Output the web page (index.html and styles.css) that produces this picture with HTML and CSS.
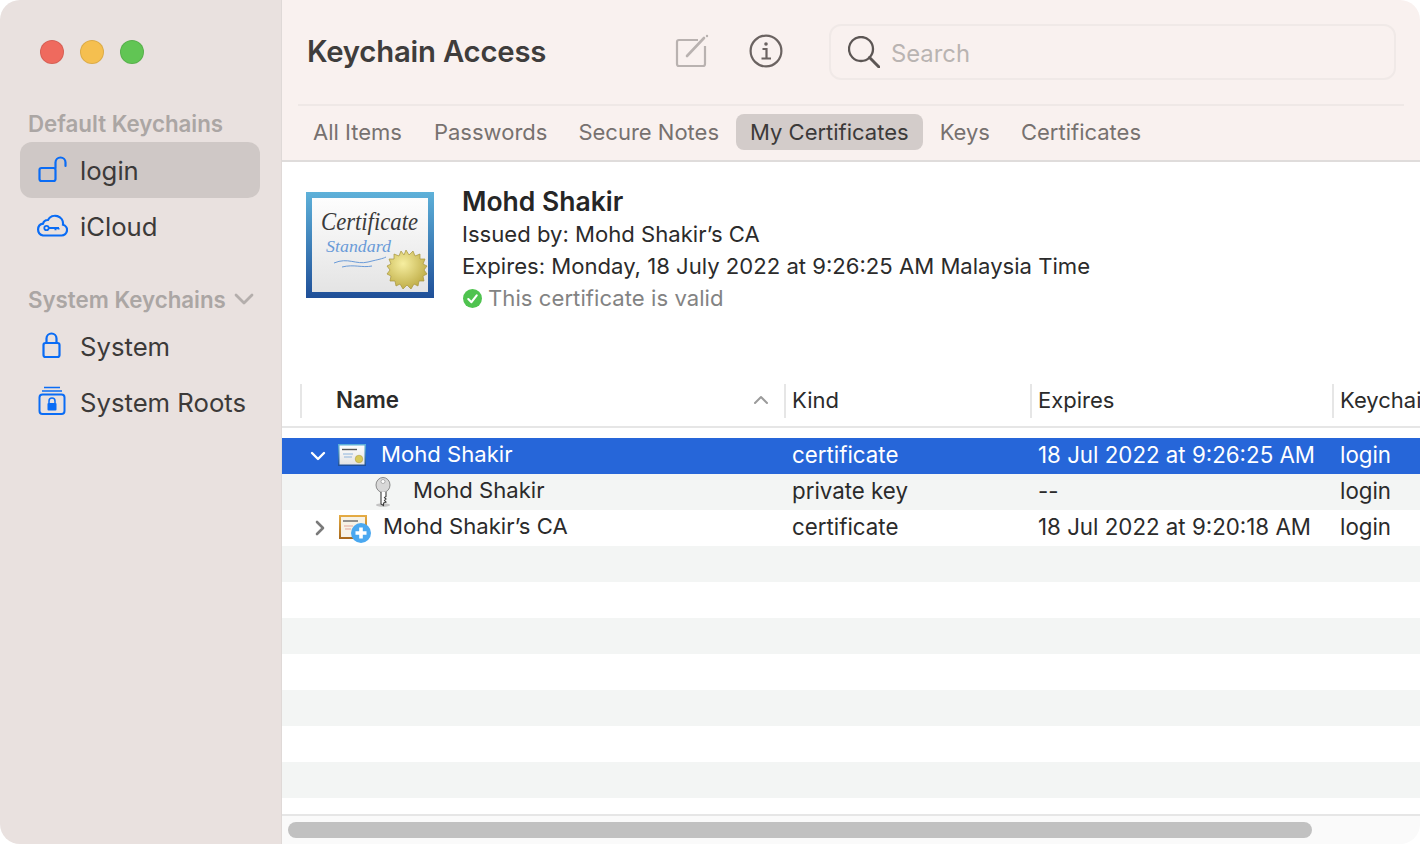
FILE: index.html
```html
<!DOCTYPE html>
<html lang="en">
<head>
<meta charset="utf-8">
<title>Keychain Access</title>
<link rel="stylesheet" href="styles.css">
</head>
<body>
<div class="window">
  <aside class="sidebar">
    <div class="lights"><span class="light red"></span><span class="light yellow"></span><span class="light green"></span></div>
    <div class="side-head">Default Keychains</div>
    <div class="side-row active">
      <svg class="side-icon" viewBox="0 0 32 32" fill="none" stroke="#0a6cf5" stroke-width="2.200"><rect x="3.500" y="15" width="16" height="13" rx="2"/><path d="M19.500 15V9.500a5 5 0 0 1 10 0V13" stroke-linecap="round"/></svg>
      <span>login</span>
    </div>
    <div class="side-row">
      <svg class="side-icon" viewBox="0 0 32 32" fill="none" stroke="#0a6cf5" stroke-width="2.200"><path d="M7 26.500h18.500a5.500 5.500 0 0 0 1.500-10.800 8 8 0 0 0-15-4.700 5 5 0 0 0-5 3.700A6 6 0 0 0 7 26.500z"/><circle cx="10.500" cy="19" r="2.200" stroke-width="1.800"/><path d="M13 19h10M19.500 19v2.200M22.500 19v1.600" stroke-width="2"/></svg>
      <span>iCloud</span>
    </div>
    <div class="side-head second">System Keychains
      <svg class="head-chev" viewBox="0 0 20 12" fill="none" stroke="#b4aeac" stroke-width="2.800" stroke-linecap="round" stroke-linejoin="round"><path d="M2 2l8 8 8-8"/></svg>
    </div>
    <div class="side-row">
      <svg class="side-icon" viewBox="0 0 32 32" fill="none" stroke="#0a6cf5" stroke-width="2.200"><rect x="7.500" y="14" width="16" height="14" rx="2"/><path d="M10.500 14V9.500a5 5 0 0 1 10 0V14"/></svg>
      <span>System</span>
    </div>
    <div class="side-row">
      <svg class="side-icon" viewBox="0 0 32 32" fill="none" stroke="#0a6cf5" stroke-width="2"><path d="M8 2.500h16M6 6h20" stroke-width="1.400"/><rect x="3.500" y="9.500" width="25" height="19.500" rx="3"/><rect x="11.500" y="18" width="9" height="7.500" rx="1" fill="#0a6cf5" stroke="none"/><path d="M13 18v-2a3 3 0 0 1 6 0v2" stroke-width="1.500"/></svg>
      <span>System Roots</span>
    </div>
  </aside>
  <main class="main">
    <header class="toolbar">
      <div class="toolbar-top">
        <h1 class="title">Keychain Access</h1>
        <svg class="compose" viewBox="0 0 34 34" fill="none" stroke="#b9b2b0" stroke-width="2.200"><path d="M23 6H4a2 2 0 0 0-2 2v22a2 2 0 0 0 2 2h24a2 2 0 0 0 2-2V12"/><path d="M12 22L29 4" stroke-width="2.600" stroke-linecap="round"/><circle cx="32" cy="2" r="1.200" fill="#b9b2b0" stroke="none"/></svg>
        <svg class="info" viewBox="0 0 34 34" fill="none" stroke="#6b6361" stroke-width="2.200"><circle cx="17" cy="17" r="15.400"/><circle cx="17" cy="10" r="1.800" fill="#6b6361" stroke="none"/><path d="M13.500 15H17.500V24M12.500 24.500H22"/></svg>
        <div class="search">
          <svg class="magnifier" viewBox="0 0 32 32" fill="none" stroke="#5c5654" stroke-width="2.300"><circle cx="13" cy="13" r="12"/><path d="M21.500 21.500L31 31" stroke-width="3" stroke-linecap="round"/></svg>
          <span class="search-text">Search</span>
        </div>
      </div>
      <nav class="tabs">
        <span class="tab">All Items</span>
        <span class="tab">Passwords</span>
        <span class="tab">Secure Notes</span>
        <span class="tab current">My Certificates</span>
        <span class="tab">Keys</span>
        <span class="tab">Certificates</span>
      </nav>
    </header>
    <section class="detail">
      <svg class="cert" viewBox="0 0 128 106">
        <defs>
          <linearGradient id="frame" x1="0" y1="0" x2="0" y2="1"><stop offset="0" stop-color="#5eb1d9"/><stop offset="1" stop-color="#1f4f98"/></linearGradient>
          <linearGradient id="frame-gold" x1="0" y1="0" x2="0" y2="1"><stop offset="0" stop-color="#e6ad45"/><stop offset="1" stop-color="#a8681a"/></linearGradient>
          <linearGradient id="paper" x1="0" y1="0" x2="0" y2="1"><stop offset="0" stop-color="#fdfdfd"/><stop offset="1" stop-color="#e4e4e4"/></linearGradient>
          <radialGradient id="seal" cx="0.400" cy="0.350" r="0.750"><stop offset="0" stop-color="#f6eea0"/><stop offset="1" stop-color="#b8a53c"/></radialGradient>
        </defs>
        <rect width="128" height="106" fill="url(#frame)"/>
        <rect x="6" y="6" width="116" height="94" fill="url(#paper)"/>
        <text x="15" y="38" class="cert-title" textLength="97" lengthAdjust="spacingAndGlyphs">Certificate</text>
        <text x="20" y="60" class="cert-sub" textLength="65" lengthAdjust="spacingAndGlyphs">Standard</text>
        <path d="M28 71c14-6 22 2 34-1s14-3 18-5M36 75c12-3 20 1 30-1" fill="none" stroke="#6a9bd8" stroke-width="1"/>
        <polygon fill="url(#seal)" stroke="#a8953c" stroke-width="0.700" points="100,58 103,63 107,59 109,64 114,62 114,67 119,67 117,72 121,74 118,78 121,82 117,84 118,89 113,89 112,94 108,92 105,97 101,93 97,97 94,92 90,94 89,89 84,89 85,84 81,82 84,78 81,74 85,72 83,67 88,67 88,62 93,64 95,59 98,63"/>
      </svg>
      <div class="detail-text">
        <div class="detail-name">Mohd Shakir</div>
        <div class="detail-line">Issued by: Mohd Shakir’s CA</div>
        <div class="detail-line">Expires: Monday, 18 July 2022 at 9:26:25 AM Malaysia Time</div>
        <div class="detail-line valid">
          <svg class="check" viewBox="0 0 18 18"><circle cx="9" cy="9" r="9" fill="#4fc34f"/><path d="M5 9.500l3 3 5-6.500" fill="none" stroke="#fff" stroke-width="2" stroke-linecap="round" stroke-linejoin="round"/></svg>
          <span>This certificate is valid</span>
        </div>
      </div>
    </section>
    <div class="table-head">
      <div class="col-name">
        <span>Name</span>
        <svg class="sort" viewBox="0 0 16 10" fill="none" stroke="#9b9b9b" stroke-width="2" stroke-linecap="round" stroke-linejoin="round"><path d="M2 8l6-6 6 6"/></svg>
      </div>
      <div class="col">Kind</div>
      <div class="col">Expires</div>
      <div class="col">Keychain</div>
    </div>
    <div class="rows">
      <div class="row selected">
        <div class="name-cell level-open">
          <svg class="chev-open" viewBox="0 0 16 10" fill="none" stroke="#fff" stroke-width="2.400" stroke-linecap="round" stroke-linejoin="round"><path d="M2 2l6 6 6-6"/></svg>
          <svg class="cert-small" viewBox="0 0 28 22"><rect width="28" height="22" fill="url(#frame)"/><rect x="1.500" y="1.500" width="25" height="19" fill="url(#paper)"/><path d="M4 5.500h15" stroke="#555" stroke-width="1.400"/><path d="M5 10h10M6 13h8" stroke="#8fb4dc" stroke-width="1"/><circle cx="21" cy="15" r="3.800" fill="#d8c95a" stroke="#a8953c" stroke-width="0.500"/></svg>
          <span>Mohd Shakir</span>
        </div>
        <div>certificate</div><div>18 Jul 2022 at 9:26:25 AM</div><div>login</div>
      </div>
      <div class="row stripe">
        <div class="name-cell level-key">
          <svg class="key" viewBox="0 0 16 30"><ellipse cx="8" cy="28" rx="7" ry="1.800" fill="#c4c4c4"/><ellipse cx="8" cy="8" rx="7" ry="7.500" fill="#d8d8d8" stroke="#8a8a8a"/><circle cx="8" cy="4.500" r="2" fill="#fff" stroke="#8a8a8a" stroke-width="0.600"/><path d="M6 15v12l2.500 1.500v-2.500l2.500-1-1.500-1.500 1.500-1.500-1.500-1.500 1.500-1V15" fill="#fff" stroke="#3c3c3c" stroke-width="1.100"/></svg>
          <span>Mohd Shakir</span>
        </div>
        <div>private key</div><div>--</div><div>login</div>
      </div>
      <div class="row">
        <div class="name-cell level-closed">
          <svg class="chev-closed" viewBox="0 0 10 16" fill="none" stroke="#7a7a7a" stroke-width="2.600" stroke-linecap="round" stroke-linejoin="round"><path d="M2 2l6 6-6 6"/></svg>
          <span class="cert-badged">
            <svg class="cert-small" viewBox="0 0 28 24"><rect width="28" height="24" fill="url(#frame-gold)"/><rect x="2" y="2" width="24" height="20" fill="#f7f2e6"/><path d="M4 6h15" stroke="#666" stroke-width="1.400"/><path d="M5 11h9M6 14h6" stroke="#e2a59a" stroke-width="1"/></svg>
            <svg class="badge" viewBox="0 0 20 20"><circle cx="10" cy="10" r="10" fill="#4aa8f0"/><path d="M10 4.500v11M4.500 10h11" stroke="#fff" stroke-width="3.600"/></svg>
          </span>
          <span>Mohd Shakir’s CA</span>
        </div>
        <div>certificate</div><div>18 Jul 2022 at 9:20:18 AM</div><div>login</div>
      </div>
      <div class="row stripe"></div>
      <div class="row"></div>
      <div class="row stripe"></div>
      <div class="row"></div>
      <div class="row stripe"></div>
      <div class="row"></div>
      <div class="row stripe"></div>
    </div>
    <div class="scrollbar"><div class="thumb"></div></div>
  </main>
</div>
</body>
</html>
```
FILE: styles.css
```css
* { box-sizing: border-box; }
html, body { margin: 0; height: 100%; background: #fff; overflow: hidden; }
body { font-family: Inter, "Liberation Sans", sans-serif; font-size: 22px; color: #2b2b2b; }
svg { display: block; flex: none; }

.window { display: flex; width: 1420px; height: 844px; border-radius: 20px; overflow: hidden; background: #fff; }

.sidebar { width: 282px; flex: none; background: #e9e1df; border-right: 1px solid #dfd9d7; padding: 40px 21px 0 20px; }
.lights { display: flex; gap: 16px; padding-left: 20px; height: 24px; }
.light { width: 24px; height: 24px; border-radius: 50%; border: 1px solid rgba(0,0,0,.1); }
.red { background: #ef6a5e; }
.yellow { background: #f5bf4f; }
.green { background: #61c554; }
.side-head { display: flex; align-items: center; justify-content: space-between; padding: 0 6px 0 8px; margin-top: 44px; height: 30px; margin-bottom: 4px; font-size: 22.300px; font-weight: 600; color: #aba6a4; white-space: nowrap; }
.side-head.second { margin-top: 30px; margin-bottom: 4px; }
.head-chev { width: 20px; height: 12px; }
.side-row { display: flex; align-items: center; gap: 12px; height: 56px; padding-left: 16px; border-radius: 12px; font-size: 25.700px; color: #3c3a39; white-space: nowrap; }
.side-row.active { background: #cfc8c6; }
.side-icon { width: 32px; height: 32px; margin-top: -2px; }

.main { flex: 1; min-width: 0; display: flex; flex-direction: column; }
.toolbar { height: 162px; flex: none; background: #f9f1ef; border-bottom: 2px solid #dfdcdb; padding: 0 16px; }
.toolbar-top { display: flex; align-items: center; height: 106px; border-bottom: 2px solid #efe8e6; padding: 0 8px 0 9px; }
.title { margin: 0; font-size: 29.300px; line-height: 1; font-weight: 600; color: #3f3d3c; width: 368px; flex: none; white-space: nowrap; letter-spacing: -.2px; }
.compose { width: 34px; height: 34px; margin-right: 40px; margin-top: -3px; }
.info { width: 34px; height: 34px; margin-right: 46px; margin-top: -3px; }
.search { flex: 1; display: flex; align-items: center; gap: 11px; height: 56px; border: 2px solid #f0e9e7; border-radius: 12px; padding: 0 17px; color: #b9b4b2; font-size: 23.800px; }
.search-text { padding-top: 2px; }
.magnifier { width: 32px; height: 32px; }
.tabs { display: flex; gap: 3px; height: 52px; align-items: center; padding-left: 1px; }
.tab { display: flex; align-items: center; height: 36px; padding: 0 14px; border-radius: 8px; font-size: 22px; color: #77716f; white-space: nowrap; }
.tab:first-child { margin-right: 1px; }
.tab.current { background: #d3ccca; color: #3c3a39; }

.detail { display: flex; height: 222px; flex: none; padding: 30px 24px 0; gap: 28px; }
.cert { width: 128px; height: 106px; }
.cert-title { font-family: "Liberation Serif", serif; font-style: italic; font-size: 25px; fill: #3a3a3a; }
.cert-sub { font-family: "Liberation Serif", serif; font-style: italic; font-size: 17px; fill: #6a9bd8; }
.detail-text { margin-top: -7px; }
.detail-name { font-size: 26.500px; font-weight: 600; line-height: 32px; height: 33px; color: #262626; }
.detail-line { font-size: 22.100px; line-height: 32px; color: #2b2b2b; white-space: nowrap; }
.detail-line.valid { display: flex; align-items: center; gap: 6px; color: #838383; padding-left: 1px; letter-spacing: .05px; }
.check { width: 19px; height: 19px; }

.table-head { display: grid; grid-template-columns: 502px 246px 302px 88px; height: 44px; flex: none; border-bottom: 2px solid #e6e6e6; font-size: 22px; align-items: stretch; overflow: hidden; }
.table-head > div { border-left: 2px solid #e6e6e6; margin-bottom: 8px; padding-left: 6px; padding-top: 2px; line-height: 28px; white-space: nowrap; overflow: hidden; }
.table-head > .col-name { margin-left: 18px; width: 484px; padding-left: 34px; display: flex; align-items: center; justify-content: space-between; padding-right: 15px; font-weight: 600; padding-top: 0; padding-bottom: 2px; font-size: 22.300px; }
.sort { width: 16px; height: 10px; }

.rows { flex: 1; padding-top: 10px; }
.row { display: grid; grid-template-columns: 510px 246px 302px 80px; grid-template-rows: 32px; align-items: center; height: 36px; padding-bottom: 4px; font-size: 22.300px; white-space: nowrap; overflow: hidden; }
.row.stripe { background: #f3f5f4; }
.row.selected { background: #2666d9; color: #fff; }
.name-cell { display: flex; align-items: center; height: 32px; font-size: 22.100px; }
.level-open { padding-left: 28px; }
.level-open .chev-open { width: 16px; height: 10px; margin-right: 12px; margin-top: 4px; }
.level-open .cert-small { width: 28px; height: 22px; margin-right: 15px; margin-top: 2px; }
.level-key { padding-left: 93px; }
.key { width: 16px; height: 30px; margin-right: 22px; margin-top: 4px; }
.level-closed { padding-left: 33px; }
.chev-closed { width: 10px; height: 16px; margin-right: 14px; margin-top: 4px; }
.cert-badged { position: relative; display: block; width: 28px; height: 24px; margin-right: 16px; margin-top: 2px; }
.cert-badged .cert-small { width: 28px; height: 24px; }
.badge { position: absolute; left: 12px; top: 8px; width: 20px; height: 20px; }

.scrollbar { height: 30px; flex: none; border-top: 2px solid #e6e6e6; background: #fafafa; padding: 6px 108px 0 6px; }
.thumb { height: 16px; border-radius: 8px; background: #c1c1c1; }
```
